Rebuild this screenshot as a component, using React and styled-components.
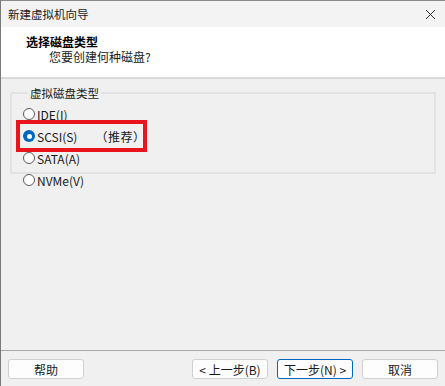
import React from 'react';
import styled, { createGlobalStyle } from 'styled-components';

const GlobalStyle = createGlobalStyle`
  html, body {
    margin: 0;
    padding: 0;
    background: #f0f0f0;
  }
  body {
    font-family: "Noto Sans CJK SC", "Liberation Sans", sans-serif;
    font-size: 12px;
    color: #1a1a1a;
  }
`;

const Window = styled.div`
  position: relative;
  width: 445px;
  height: 386px;
  box-sizing: border-box;
  display: flex;
  flex-direction: column;
  border-left: 1px solid #7a7a7a;
  border-top: 1px solid #8a8a8a;
  background: #f0f0f0;
  overflow: hidden;
`;

const TitleBar = styled.div`
  height: 26px;
  flex: none;
  display: flex;
  align-items: center;
  justify-content: space-between;
  padding: 0 9px 0 7px;
  background: #f3f3f3;
  font-size: 11.5px;
  color: #1a1a1a;
`;

const CloseIcon = () => (
  <svg width="11" height="11" viewBox="0 0 11 11">
    <path d="M1 1 L10 10 M10 1 L1 10" stroke="#333" strokeWidth="1" fill="none" />
  </svg>
);

const Header = styled.div`
  height: 43px;
  flex: none;
  background: #fff;
  border-bottom: 2px solid #dadada;
  padding: 7px 0 0 25px;
  box-sizing: content-box;
`;

const HeaderTitle = styled.div`
  font-weight: bold;
  font-size: 12px;
  line-height: 15px;
  color: #000;
`;

const HeaderSub = styled.div`
  font-size: 12px;
  line-height: 15px;
  padding-left: 23px;
  color: #222;
`;

const Body = styled.div`
  position: relative;
  flex: 1;
  padding: 6px 9px 0 9px;
`;

const Group = styled.fieldset`
  margin: 0;
  padding: 2px 0 7px 11px;
  width: 426px;
  height: 89px;
  box-sizing: border-box;
  border: 2px solid #e2e2e2;
  border-radius: 1px;
`;

const Legend = styled.legend`
  padding: 0 2px;
  margin-left: 5px;
  font-size: 11.5px;
  line-height: 16px;
  color: #1a1a1a;
`;

const Option = styled.label`
  display: flex;
  align-items: center;
  height: 22px;
  gap: 2px;
  color: #1a1a1a;
`;

const Radio = styled.span`
  width: 12px;
  height: 12px;
  box-sizing: border-box;
  border-radius: 50%;
  flex: none;
  display: flex;
  align-items: center;
  justify-content: center;
  border: ${(p) => (p.checked ? 'none' : '1px solid #5a5a5a')};
  background: ${(p) => (p.checked ? '#0067c0' : '#fff')};
  &::after {
    content: '';
    width: 5px;
    height: 5px;
    border-radius: 50%;
    background: #fff;
    display: ${(p) => (p.checked ? 'block' : 'none')};
  }
`;

const Note = styled.span`
  margin-left: 22px;
  font-feature-settings: "halt";
  letter-spacing: 0.5px;
`;

const Highlight = styled.div`
  position: absolute;
  left: 15px;
  top: 41px;
  width: 131px;
  height: 32px;
  box-sizing: border-box;
  border: 4px solid #e8151e;
  pointer-events: none;
`;

const Footer = styled.div`
  flex: none;
  height: 36px;
  box-sizing: border-box;
  border-top: 1px solid #a8a8a8;
  padding: 8px 7px 0 7px;
  display: flex;
  gap: 9px;
`;

const Button = styled.button`
  width: 76px;
  height: 20px;
  box-sizing: border-box;
  font-family: inherit;
  font-size: 12px;
  color: #1a1a1a;
  background: #fdfdfd;
  border: 1px solid ${(p) => (p.primary ? '#0067c0' : '#d0d0d0')};
  border-radius: 3px;
  padding: 0;
  display: flex;
  align-items: center;
  justify-content: center;
  margin-left: ${(p) => (p.push ? 'auto' : '0')};
`;

const options = [
  { label: 'IDE(I)' },
  { label: 'SCSI(S)', checked: true, note: '（推荐）' },
  { label: 'SATA(A)' },
  { label: 'NVMe(V)' },
];

export default function App() {
  return (
    <>
      <GlobalStyle />
      <Window>
        <TitleBar>
          <span>新建虚拟机向导</span>
          <CloseIcon />
        </TitleBar>
        <Header>
          <HeaderTitle>选择磁盘类型</HeaderTitle>
          <HeaderSub>您要创建何种磁盘?</HeaderSub>
        </Header>
        <Body>
          <Group>
            <Legend>虚拟磁盘类型</Legend>
            {options.map((o) => (
              <Option key={o.label}>
                <Radio checked={o.checked} />
                <span>{o.label}</span>
                {o.note && <Note>{o.note}</Note>}
              </Option>
            ))}
          </Group>
          <Highlight />
        </Body>
        <Footer>
          <Button>帮助</Button>
          <Button push>&lt; 上一步(B)</Button>
          <Button primary>下一步(N) &gt;</Button>
          <Button>取消</Button>
        </Footer>
      </Window>
    </>
  );
}
